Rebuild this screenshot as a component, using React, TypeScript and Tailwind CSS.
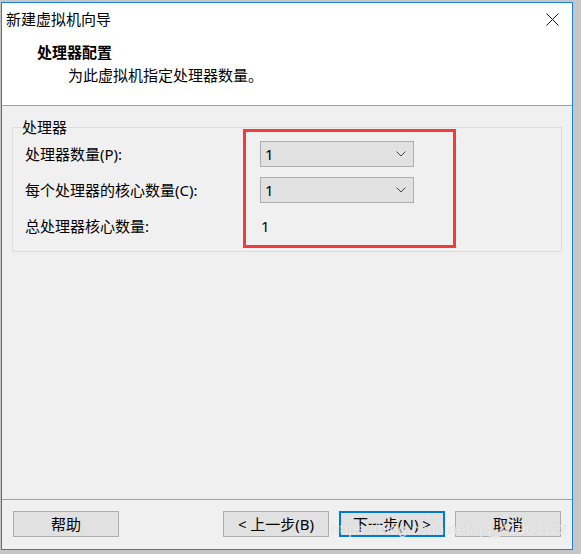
const font = "font-['Noto_Sans','Noto_Sans_CJK_SC',sans-serif]";

function Select({ value }: { value: string }) {
  return (
    <div className="flex h-[26px] w-[154px] items-center justify-between border border-[#adadad] bg-[#e1e1e1] pl-[4px] pr-[7px]">
      <span>{value}</span>
      <svg width="10" height="6" viewBox="0 0 10 6" className="text-[#444]">
        <path d="M0.5 0.5 L5 5 L9.5 0.5" fill="none" stroke="currentColor" strokeWidth="1" />
      </svg>
    </div>
  );
}

function Button({ label, primary }: { label: string; primary?: boolean }) {
  return (
    <button
      className={
        "flex h-[26px] w-[106px] items-center justify-center bg-[#e1e1e1] " +
        (primary ? "border-2 border-[#0078d7]" : "border border-[#adadad]")
      }
    >
      {label}
    </button>
  );
}

const rows = [
  { label: "处理器数量(P):", select: true },
  { label: "每个处理器的核心数量(C):", select: true },
  { label: "总处理器核心数量:", select: false },
];

export default function App() {
  return (
    <div className={`relative h-[554px] w-[581px] overflow-hidden bg-[#c6c6c6] pl-[1px] pt-[2px] text-[15px] leading-[20px] text-black ${font}`}>
      <div className="flex h-[548px] w-[572px] flex-col border border-[#1883d7] bg-[#f0f0f0]">
        <div className="h-[103px] shrink-0 border-b border-[#a0a0a0] bg-white">
          <div className="flex items-center justify-between pl-[4px] pr-[13px] pt-[6px]">
            <span>新建虚拟机向导</span>
            <svg width="13" height="13" viewBox="0 0 13 13">
              <path d="M0.5 0.5 L12.5 12.5 M12.5 0.5 L0.5 12.5" stroke="#111" strokeWidth="1" />
            </svg>
          </div>
          <div className="mt-[13px] pl-[35px] font-bold">处理器配置</div>
          <div className="mt-[3px] pl-[66px]">为此虚拟机指定处理器数量。</div>
        </div>

        <div className="flex-1">
          <div className="relative mx-[10px] mt-[21px] border border-[#dcdcdc] pb-[12px] pl-[12px] pt-[13px]">
            <span className="absolute left-[8px] top-[-11px] bg-[#f0f0f0] px-[1px]">处理器</span>
            <div className="flex flex-col gap-[10px]">
              {rows.map((r) => (
                <div key={r.label} className="flex h-[26px] items-center">
                  <span className="w-[235px]">{r.label}</span>
                  {r.select ? <Select value="1" /> : <span className="pl-[1px]">1</span>}
                </div>
              ))}
            </div>
          </div>
        </div>

        <div className="flex shrink-0 border-t border-[#a0a0a0] pb-[12px] pl-[11px] pr-[11px] pt-[11px]">
          <Button label="帮助" />
          <div className="ml-auto flex gap-[10px]">
            <Button label="< 上一步(B)" />
            <Button label="下一步(N) >" primary />
            <Button label="取消" />
          </div>
        </div>
      </div>

      <div className="absolute left-[243px] top-[129px] h-[119px] w-[213px] border-[3px] border-[#f23b3b]" />

      <div className="pointer-events-none absolute left-[331px] top-[519px] font-['Liberation_Sans',sans-serif] text-[15.5px] text-white/70 [text-shadow:0_0_1px_rgba(150,150,150,0.45)]">
        https://blog.csdn.net/qq_41901122
      </div>
    </div>
  );
}
